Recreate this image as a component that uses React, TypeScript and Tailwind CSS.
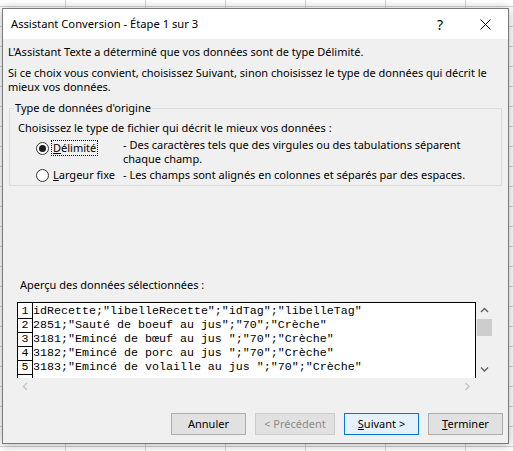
import React from 'react';

const rows = [
  'idRecette;"libelleRecette";"idTag";"libelleTag"',
  '2851;"Sauté de boeuf au jus";"70";"Crèche"',
  '3181;"Emincé de bœuf au jus ";"70";"Crèche"',
  '3182;"Emincé de porc au jus ";"70";"Crèche"',
  '3183;"Emincé de volaille au jus ";"70";"Crèche"',
];

const Radio = ({ checked }: { checked?: boolean }) => (
  <span className="w-[13px] h-[13px] rounded-full border border-[#333333] bg-white flex items-center justify-center shrink-0">
    {checked && <span className="w-[7px] h-[7px] rounded-full bg-[#1a1a1a]" />}
  </span>
);

const Chevron = ({ dir, color }: { dir: 'up' | 'down' | 'left' | 'right'; color: string }) => {
  const pts = {
    up: '1,5 4.5,1.5 8,5',
    down: '1,1.5 4.5,5 8,1.5',
    left: '5,1 1.5,4.5 5,8',
    right: '1.5,1 5,4.5 1.5,8',
  }[dir];
  const vertical = dir === 'up' || dir === 'down';
  return (
    <svg width={vertical ? 9 : 7} height={vertical ? 7 : 9} viewBox={vertical ? '0 0 9 7' : '0 0 7 9'}>
      <polyline points={pts} fill="none" stroke={color} strokeWidth="1.4" />
    </svg>
  );
};

const Btn = ({
  children,
  w,
  variant = 'normal',
}: {
  children: React.ReactNode;
  w: string;
  variant?: 'normal' | 'default' | 'disabled';
}) => {
  const look =
    variant === 'default'
      ? 'bg-[#e5f1fb] border-[#0078d7] text-black'
      : variant === 'disabled'
        ? 'bg-[#e1e1e1] border-[#cccccc] text-[#8c8c8c]'
        : 'bg-[#e1e1e1] border-[#adadad] text-black';
  return (
    <div className={`${w} h-[22px] border flex items-center justify-center leading-[14px] ${look}`}>
      {children}
    </div>
  );
};

export default function App() {
  return (
    <div className="w-[513px] h-[451px] overflow-hidden bg-white bg-[linear-gradient(to_right,#d4d4d4_1px,transparent_1px),linear-gradient(to_bottom,#d4d4d4_1px,transparent_1px)] [background-size:80px_20px] [background-position:65px_6px] pl-[2px] pt-[8px]">
      <div className="w-[507px] h-[436px] border border-[#7a7a7a] bg-[#f0f0f0] shadow-[0_1px_10px_rgba(0,0,0,0.3)] flex flex-col font-['Noto_Sans',sans-serif] text-[11px] text-black">
        {/* title bar */}
        <div className="h-[30px] bg-white flex items-center shrink-0">
          <span className="pl-[8px] leading-[14px] text-[11.2px]">Assistant Conversion - Étape 1 sur 3</span>
          <div className="ml-auto w-[46px] h-full flex items-center justify-center pl-[2px] text-[14px]">?</div>
          <div className="w-[46px] h-full flex items-center justify-center">
            <svg width="11" height="11" viewBox="0 0 11 11">
              <path d="M0.5 0.5 L10.5 10.5 M10.5 0.5 L0.5 10.5" stroke="#000" strokeWidth="1" />
            </svg>
          </div>
        </div>

        {/* body */}
        <div className="flex-1 flex flex-col leading-[14px]">
          <p className="mt-[6px] pl-[5px] whitespace-nowrap">
            L'Assistant Texte a déterminé que vos données sont de type Délimité.
          </p>
          <p className="mt-[7px] pl-[5px] whitespace-nowrap">
            Si ce choix vous convient, choisissez Suivant, sinon choisissez le type de données qui décrit le
            <br />
            mieux vos données.
          </p>

          <fieldset className="mt-[7px] ml-[6px] w-[493px] border border-[#dcdcdc] pb-[3px]">
            <legend className="ml-[4px] px-[1px] leading-[14px]">Type de données d'origine</legend>
            <p className="mt-[6px] pl-[8px] whitespace-nowrap">
              Choisissez le type de fichier qui décrit le mieux vos données :
            </p>
            <div className="mt-[3px] flex">
              <div className="w-[113px] shrink-0 pl-[26px] mt-[2px] h-[16px] flex items-center">
                <Radio checked />
                <span className="ml-[2px] px-[1px] border border-dotted border-black leading-[14px]">
                  <u>D</u>élimité
                </span>
              </div>
              <p className="whitespace-nowrap">
                - Des caractères tels que des virgules ou des tabulations séparent
                <br />
                chaque champ.
              </p>
            </div>
            <div className="mt-[2px] flex">
              <div className="w-[113px] shrink-0 pl-[26px] h-[14px] flex items-center">
                <Radio />
                <span className="ml-[4px]">
                  <u>L</u>argeur fixe
                </span>
              </div>
              <p className="whitespace-nowrap">- Les champs sont alignés en colonnes et séparés par des espaces.</p>
            </div>
          </fieldset>

          <p className="mt-[92px] pl-[17px] whitespace-nowrap">Aperçu des données sélectionnées :</p>

          {/* data preview */}
          <div className="mt-[10px] ml-[14px] w-[476px]">
            <div className="flex h-[76px]">
              <div className="w-[459px] h-full border-t border-l border-r border-black bg-white flex overflow-hidden font-['Liberation_Mono',monospace] text-[11.67px] leading-[13px]">
                <div className="w-[15px] h-full shrink-0 border-r border-black pt-[2px]">
                  {rows.map((_, i) => (
                    <div key={i} className="h-[14px] border-b border-black text-center">
                      {i + 1}
                    </div>
                  ))}
                </div>
                <div className="pt-[2px] whitespace-pre">
                  {rows.map((r, i) => (
                    <div key={i} className="h-[14px]">
                      {r}
                    </div>
                  ))}
                </div>
              </div>
              <div className="w-[17px] h-full flex flex-col items-stretch">
                <div className="h-[17px] flex items-center justify-center">
                  <Chevron dir="up" color="#606060" />
                </div>
                <div className="h-[17px] mx-[1px] bg-[#cdcdcd]" />
                <div className="flex-1" />
                <div className="h-[17px] flex items-center justify-center">
                  <Chevron dir="down" color="#606060" />
                </div>
              </div>
            </div>
            <div className="w-[459px] h-[16px] flex items-center justify-between">
              <div className="w-[17px] flex justify-center">
                <Chevron dir="left" color="#c4c4c4" />
              </div>
              <div className="w-[17px] flex justify-center">
                <Chevron dir="right" color="#c4c4c4" />
              </div>
            </div>
          </div>

          {/* buttons */}
          <div className="mt-auto mb-[8px] pr-[5px] flex justify-end gap-[9px]">
            <Btn w="w-[75px]">Annuler</Btn>
            <Btn w="w-[80px]" variant="disabled">
              &lt; Précédent
            </Btn>
            <Btn w="w-[75px]" variant="default">
              <span>
                <u>S</u>uivant &gt;
              </span>
            </Btn>
            <Btn w="w-[75px]">
              <span>
                <u>T</u>erminer
              </span>
            </Btn>
          </div>
        </div>
      </div>
    </div>
  );
}
